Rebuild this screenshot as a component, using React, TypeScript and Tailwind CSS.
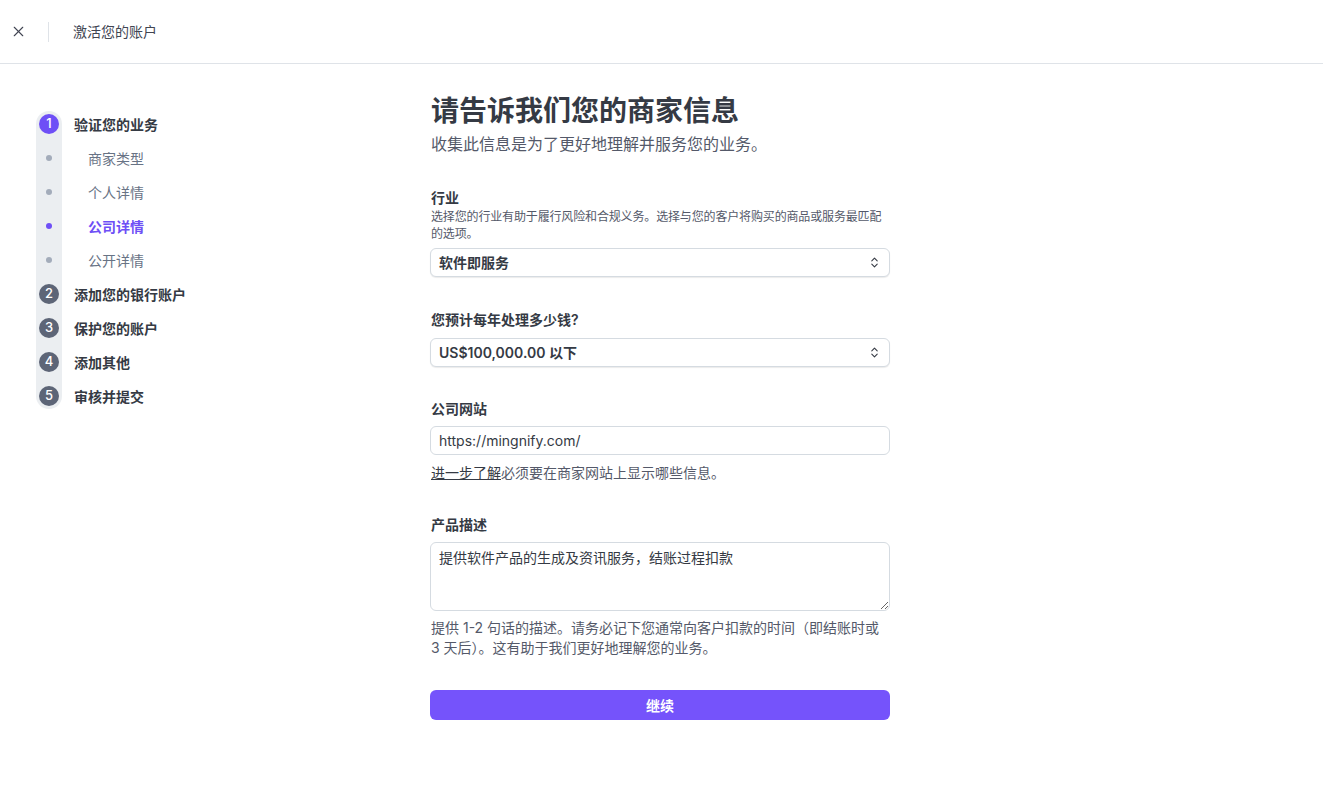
import React from "react";
import { X, ChevronsUpDown } from "lucide-react";

const font = { fontFamily: '"Inter", "Noto Sans CJK SC", sans-serif' };

const steps = [
  { label: "验证您的业务", num: 1, active: true },
  { label: "商家类型", sub: true },
  { label: "个人详情", sub: true },
  { label: "公司详情", sub: true, current: true },
  { label: "公开详情", sub: true },
  { label: "添加您的银行账户", num: 2 },
  { label: "保护您的账户", num: 3 },
  { label: "添加其他", num: 4 },
  { label: "审核并提交", num: 5 },
];

const Sidebar = () => {
  return (
    <div className="w-[430px] shrink-0 pl-[36px] pt-[43px]">
      <div className="relative">
        <div className="absolute left-0 top-[4px] bottom-[4px] w-[26px] rounded-full bg-[#ebeef1]"></div>
        <div className="relative flex flex-col">
          {steps.map((s, i) => (
            <div key={i} className="flex items-center h-[34px]">
              <div className="w-[26px] flex justify-center">
                {s.sub ? (
                  <span
                    className={
                      "w-[6px] h-[6px] rounded-full " +
                      (s.current ? "bg-[#6e4ff6]" : "bg-[#a3acba]")
                    }
                  ></span>
                ) : (
                  <span
                    className={
                      "w-[20px] h-[20px] rounded-full flex items-center justify-center text-white text-[13px] font-medium " +
                      (s.active ? "bg-[#6e4ff6]" : "bg-[#5d6577]")
                    }
                  >
                    {s.num}
                  </span>
                )}
              </div>
              {s.sub ? (
                <span
                  className={
                    "ml-[26px] text-[14px] " +
                    (s.current
                      ? "text-[#6e4ff6] font-semibold"
                      : "text-[#687385]")
                  }
                >
                  {s.label}
                </span>
              ) : (
                <span className="ml-[12px] text-[14px] font-semibold text-[#353a44]">
                  {s.label}
                </span>
              )}
            </div>
          ))}
        </div>
      </div>
    </div>
  );
};

const SelectBox = ({ value, top }: { value: string; top: string }) => (
  <div className={top + " h-[29px] rounded-md border border-[#d5dbe1] shadow-[0_1px_1px_rgba(0,0,0,0.08)] flex items-center justify-between px-[8px] bg-white"}>
    <span className="text-[14px] font-semibold text-[#353a44]">{value}</span>
    <ChevronsUpDown size={13} strokeWidth={2} className="text-[#353a44]" />
  </div>
);

export default function App() {
  return (
    <div className="min-h-screen bg-white text-[#353a44]" style={font}>
      {/* Header */}
      <div className="h-[64px] border-b border-[#dfe3e8] flex items-center">
        <div className="w-[36px] flex justify-center">
          <X size={17} strokeWidth={1.6} className="text-[#414552]" />
        </div>
        <div className="w-px h-[20px] bg-[#dfe3e8] ml-[12px]"></div>
        <span className="ml-[24px] text-[14px] text-[#414552]">激活您的账户</span>
      </div>

      <div className="flex">
        <Sidebar />

        {/* Main */}
        <div className="w-[460px] pt-[29px] pb-[80px]">
          <h1 className="text-[28px] leading-[36px] font-bold text-[#353a44] ml-[1px]">
            请告诉我们您的商家信息
          </h1>
          <p className="mt-[4px] text-[16px] leading-[22px] text-[#545969] ml-[1px]">
            收集此信息是为了更好地理解并服务您的业务。
          </p>

          <div className="mt-[34px]">
            <div className="text-[14px] leading-[18px] font-semibold ml-[1px]">行业</div>
            <div className="text-[12px] leading-[17px] text-[#545969] ml-[1px] mt-[1px] tracking-[-0.15px]">
              选择您的行业有助于履行风险和合规义务。选择与您的客户将购买的商品或服务最匹配的选项。
            </div>
            <SelectBox value="软件即服务" top="mt-[6px]" />
          </div>

          <div className="mt-[34px]">
            <div className="text-[14px] leading-[18px] font-semibold ml-[1px]">
              您预计每年处理多少钱?
            </div>
            <SelectBox value="US$100,000.00 以下" top="mt-[9px]" />
          </div>

          <div className="mt-[33px]">
            <div className="text-[14px] leading-[18px] font-semibold ml-[1px]">公司网站</div>
            <div className="mt-[8px] h-[29px] rounded-md border border-[#d5dbe1] flex items-center px-[8px]">
              <span className="text-[14px] text-[#353a44]">https://mingnify.com/</span>
            </div>
            <div className="mt-[8px] text-[14px] leading-[20px] text-[#545969] ml-[1px]">
              <span className="underline text-[#353a44]">进一步了解</span>
              必须要在商家网站上显示哪些信息。
            </div>
          </div>

          <div className="mt-[33px]">
            <div className="text-[14px] leading-[18px] font-semibold ml-[1px]">产品描述</div>
            <textarea
              className="mt-[8px] block w-full h-[69px] rounded-md border border-[#d5dbe1] px-[8px] py-[5px] text-[14px] leading-[20px] text-[#353a44] outline-none"
              style={font}
              defaultValue="提供软件产品的生成及资讯服务，结账过程扣款"
            />
            <div className="mt-[7px] text-[14px] leading-[20px] text-[#545969] ml-[1px]">
              提供 1-2 句话的描述。请务必记下您通常向客户扣款的时间（即结账时或 3 天后）。这有助于我们更好地理解您的业务。
            </div>
          </div>

          <button className="mt-[32px] w-full h-[30px] rounded-md bg-[#7553fb] text-white text-[14px] font-semibold">
            继续
          </button>
        </div>
      </div>
    </div>
  );
}
